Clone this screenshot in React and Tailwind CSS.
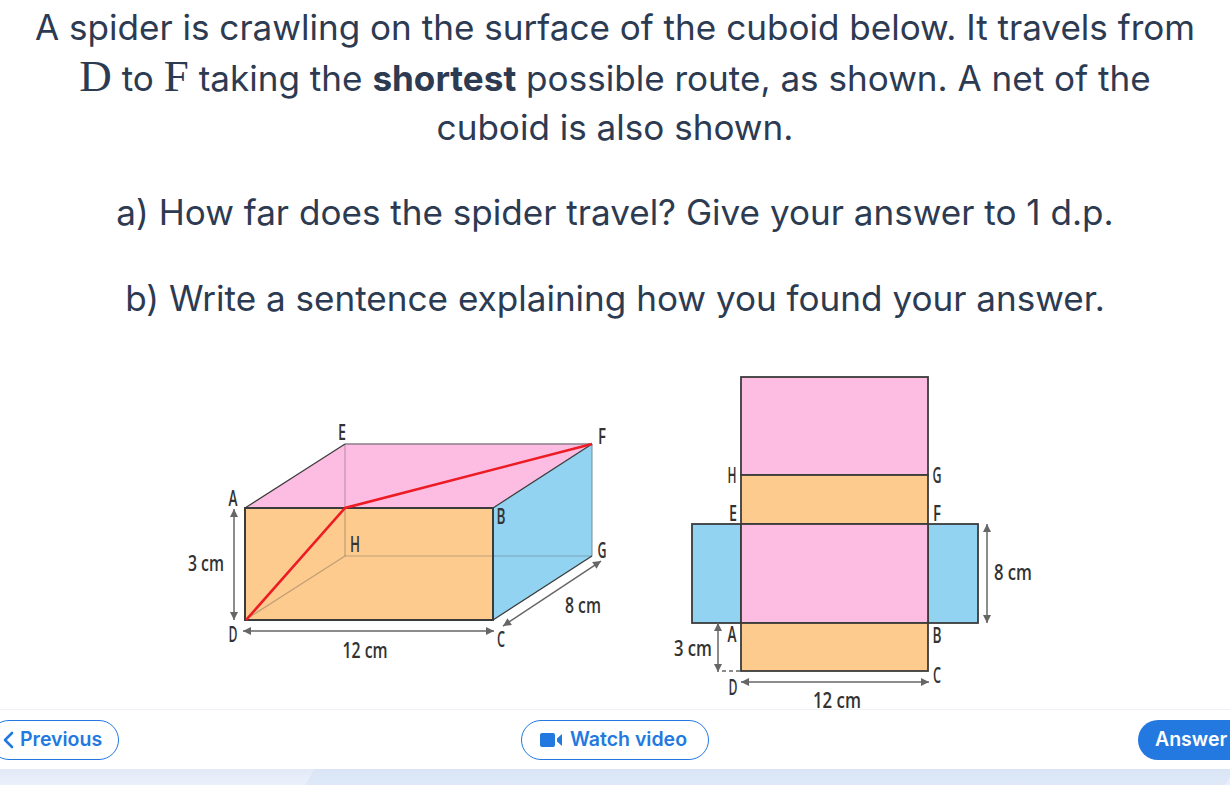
const ink = "#3b3b3b";
const grey = "#666666";

function Arrow({ x1, y1, x2, y2 }) {
  const a = Math.atan2(y2 - y1, x2 - x1);
  const head = (x, y, t) => {
    const p = [
      [x, y],
      [x - 8 * Math.cos(t) + 4 * Math.sin(t), y - 8 * Math.sin(t) - 4 * Math.cos(t)],
      [x - 8 * Math.cos(t) - 4 * Math.sin(t), y - 8 * Math.sin(t) + 4 * Math.cos(t)],
    ];
    return p.map((q) => q.join(",")).join(" ");
  };
  return (
    <g>
      <line x1={x1} y1={y1} x2={x2} y2={y2} stroke={grey} strokeWidth="1.5" />
      <polygon points={head(x2, y2, a)} fill={grey} />
      <polygon points={head(x1, y1, a + Math.PI)} fill={grey} />
    </g>
  );
}

function Label({ x, y, w, children }) {
  return (
    <text
      x={x}
      y={y + 1}
      textAnchor="middle"
      textLength={w}
      lengthAdjust="spacingAndGlyphs"
      className="font-['Open_Sans'] text-[21px] font-semibold fill-[#333333]"
    >
      {children}
    </text>
  );
}

function CuboidFigure() {
  return (
    <svg viewBox="170 410 460 260" className="w-[460px] h-[260px] mt-10 shrink-0">
      <polygon points="245,508 345,444 592,444 493,508" fill="#fdbde2" />
      <polygon points="493,508 592,444 592,556 493,620" fill="#92d3f1" />
      <rect x="245" y="508" width="248" height="112" fill="#fecb8f" />
      <line x1="345" y1="444" x2="592" y2="444" stroke="#8a7f8a" strokeWidth="1.4" />
      <line x1="592" y1="444" x2="592" y2="556" stroke="#6f8d9c" strokeWidth="1" />
      <g stroke="#4a4a4a" strokeOpacity="0.35" strokeWidth="1.2">
        <line x1="345" y1="444" x2="345" y2="556" />
        <line x1="345" y1="556" x2="592" y2="556" />
        <line x1="345" y1="556" x2="245" y2="620" />
      </g>
      <g stroke={ink} strokeWidth="1.3">
        <line x1="245" y1="508" x2="345" y2="444" />
        <line x1="493" y1="508" x2="592" y2="444" />
        <line x1="493" y1="620" x2="592" y2="556" />
      </g>
      <rect x="245" y="508" width="248" height="112" fill="none" stroke={ink} strokeWidth="2" />
      <polyline points="246,620 345,508 592,444" fill="none" stroke="#ed1c24" strokeWidth="2.6" />
      <Arrow x1={234} y1={509} x2={234} y2={620} />
      <Arrow x1={243} y1={631} x2={494} y2={631} />
      <Arrow x1={503} y1={626} x2={601} y2={561} />
      <Label x={342} y={439} w={8}>E</Label>
      <Label x={602} y={443} w={8}>F</Label>
      <Label x={233} y={505} w={9}>A</Label>
      <Label x={501} y={523} w={9}>B</Label>
      <Label x={355} y={551} w={10}>H</Label>
      <Label x={602} y={557} w={9}>G</Label>
      <Label x={233} y={641} w={9}>D</Label>
      <Label x={501} y={646} w={8}>C</Label>
      <Label x={206} y={570} w={36}>3 cm</Label>
      <Label x={365} y={657} w={45}>12 cm</Label>
      <Label x={583} y={612} w={36}>8 cm</Label>
    </svg>
  );
}

function NetFigure() {
  return (
    <svg viewBox="660 370 400 339" className="w-[400px] h-[339px] shrink-0 overflow-visible">
      <g stroke={ink} strokeWidth="1.8">
        <rect x="692" y="524" width="49" height="99" fill="#92d3f1" />
        <rect x="928" y="524" width="50" height="99" fill="#92d3f1" />
        <rect x="741" y="377" width="187" height="98" fill="#fdbde2" />
        <rect x="741" y="475" width="187" height="49" fill="#fecb8f" />
        <rect x="741" y="524" width="187" height="99" fill="#fdbde2" />
        <rect x="741" y="623" width="187" height="48" fill="#fecb8f" />
      </g>
      <Arrow x1={987} y1={524} x2={987} y2={623} />
      <Arrow x1={718} y1={623} x2={718} y2={672} />
      <Arrow x1={741} y1={682} x2={929} y2={682} />
      <line x1="722" y1="671" x2="741" y2="671" stroke={grey} strokeWidth="1.4" strokeDasharray="4 3" />
      <Label x={732} y={482} w={9}>H</Label>
      <Label x={937} y={482} w={9}>G</Label>
      <Label x={733} y={520} w={8}>E</Label>
      <Label x={937} y={520} w={8}>F</Label>
      <Label x={732} y={641} w={9}>A</Label>
      <Label x={937} y={642} w={9}>B</Label>
      <Label x={937} y={682} w={8}>C</Label>
      <Label x={733} y={694} w={9}>D</Label>
      <Label x={693} y={655} w={38}>3 cm</Label>
      <Label x={1013} y={579} w={38}>8 cm</Label>
      <Label x={837} y={707} w={48}>12 cm</Label>
    </svg>
  );
}

export default function App() {
  return (
    <div className="w-[1230px] h-[785px] overflow-hidden flex flex-col bg-white font-['Inter',sans-serif] text-[#2d3b52]">
      <div className="h-[370px] shrink-0 pt-[2px] text-center text-[35.1px] leading-[50px]">
        <p>A spider is crawling on the surface of the cuboid below. It travels from</p>
        <p className="pt-[1px] -mb-[1px]">
          <span className="font-['Liberation_Serif',serif] text-[45px] leading-none">D</span> to{" "}
          <span className="font-['Liberation_Serif',serif] text-[45px] leading-none">F</span> taking the{" "}
          <strong className="font-bold">shortest</strong> possible route, as shown. A net of the
        </p>
        <p>cuboid is also shown.</p>
        <p className="mt-[35px]">a) How far does the spider travel? Give your answer to 1 d.p.</p>
        <p className="mt-[36px]">b) Write a sentence explaining how you found your answer.</p>
      </div>

      <div className="h-[339px] shrink-0 flex items-start gap-[30px] pl-[170px]">
        <CuboidFigure />
        <NetFigure />
      </div>

      <div className="h-[60px] shrink-0 border-t border-[#eef1f7] grid grid-cols-3 items-center text-[19.5px] font-semibold">
        <button className="h-10 w-[130px] -ml-[11px] pt-[1px] rounded-full border border-[#2379e0] text-[#2379e0] flex items-center gap-[6px] pl-[12px]">
          <svg width="12" height="18" viewBox="0 0 12 18" fill="none" stroke="#2379e0" strokeWidth="2.6" strokeLinecap="round" strokeLinejoin="round">
            <path d="M10 2 3 9l7 7" />
          </svg>
          Previous
        </button>
        <button className="h-10 w-[188px] pt-[1px] pr-[3px] justify-self-center rounded-full border border-[#2379e0] text-[#2379e0] flex items-center justify-center gap-[7px]">
          <svg width="23" height="16" viewBox="0 0 23 16" fill="#2379e0">
            <rect x="0" y="1" width="15" height="14" rx="2" />
            <path d="M17 6.500 22 2v12l-5-4.500z" />
          </svg>
          Watch video
        </button>
        <button className="h-10 w-[110px] -mr-[18px] pt-[1px] justify-self-end rounded-full bg-[#2379e0] text-white flex items-center pl-[17px]">
          Answer
        </button>
      </div>

      <div className="flex-1 overflow-hidden bg-gradient-to-b from-[#e2e9f7] to-[#ebf1fb]">
        <div className="ml-[310px] h-full -skew-x-[30deg] bg-gradient-to-b from-[#d9e5f5] to-[#dfe9f8]" />
      </div>
    </div>
  );
}
